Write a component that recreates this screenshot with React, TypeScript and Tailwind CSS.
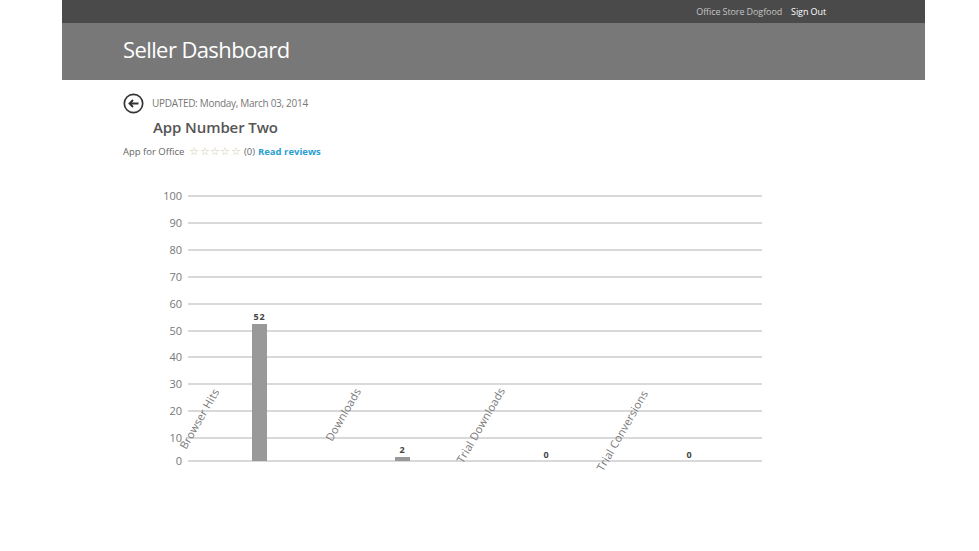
const gridLines = [
  { label: "100", y: 196 },
  { label: "90", y: 223 },
  { label: "80", y: 250 },
  { label: "70", y: 277 },
  { label: "60", y: 304 },
  { label: "50", y: 331 },
  { label: "40", y: 357 },
  { label: "30", y: 384 },
  { label: "20", y: 411 },
  { label: "10", y: 438 },
  { label: "0", y: 461 },
];

const bars = [
  { value: "52", x: 252, top: 324, labelX: 259.5, labelY: 319.5 },
  { value: "2", x: 395, top: 457, labelX: 402.5, labelY: 453 },
  { value: "0", x: 539, top: 461, labelX: 546.5, labelY: 458 },
  { value: "0", x: 682, top: 461, labelX: 689.5, labelY: 458 },
];

const categories = [
  { label: "Browser Hits", x: 186, y: 450 },
  { label: "Downloads", x: 332, y: 442 },
  { label: "Trial Downloads", x: 463, y: 464 },
  { label: "Trial Conversions", x: 603, y: 472 },
];

function Chart() {
  return (
    <svg width="979" height="330" viewBox="0 170 979 330" className="block -ml-[123px]" style={{ fontFamily: '"Open Sans", sans-serif' }}>
      {gridLines.map((line) => (
        <g key={line.label}>
          <line x1="188" x2="762" y1={line.y} y2={line.y} stroke="#cdcdcd" strokeWidth="1.5" />
          <text x="182" y={line.y + 4} textAnchor="end" fontSize="11" fill="#777777">
            {line.label}
          </text>
        </g>
      ))}
      {bars.map((bar, i) => (
        <g key={i}>
          {bar.top < 461 && <rect x={bar.x} y={bar.top} width="15" height={461 - bar.top} fill="#999999" />}
          <text x={bar.labelX} y={bar.labelY} textAnchor="middle" fontSize="9" fontWeight="700" letterSpacing="0.8" fill="#444444">
            {bar.value}
          </text>
        </g>
      ))}
      {categories.map((cat) => (
        <text
          key={cat.label}
          x={cat.x}
          y={cat.y}
          fontSize="11"
          letterSpacing="0.15"
          fill="#777777"
          transform={`rotate(-60 ${cat.x} ${cat.y})`}
        >
          {cat.label}
        </text>
      ))}
    </svg>
  );
}

export default function App() {
  return (
    <div className="h-[551px] w-[979px] overflow-hidden bg-white" style={{ fontFamily: '"Open Sans", sans-serif' }}>
      <header className="ml-[62px] w-[863px]">
        <div className="flex h-[23px] items-center justify-end gap-[9px] bg-[#4a4a4a] pr-[99px] text-[9px] tracking-[-0.1px]">
          <span className="text-[#c4c4c4]">Office Store Dogfood</span>
          <span className="text-white">Sign Out</span>
        </div>
        <div className="flex h-[57px] items-center bg-[#787878] pb-[6px] pl-[61px]">
          <h1 className="text-[22px] leading-none tracking-[-0.6px] text-white">Seller Dashboard</h1>
        </div>
      </header>

      <main className="ml-[123px]">
        <div className="mt-[11px] flex h-[24px] items-center gap-[8px]">
          <svg width="21" height="21" viewBox="0 0 21 21" fill="none" stroke="#333333">
            <circle cx="10.5" cy="10.5" r="9.2" strokeWidth="1.7" />
            <path d="M15.5 10.5H6.5M10 7l-3.5 3.5L10 14" strokeWidth="1.9" />
          </svg>
          <p className="text-[10px] tracking-[-0.3px] text-[#777777]">UPDATED: Monday, March 03, 2014</p>
        </div>
        <h2 className="mt-[2px] pl-[30px] text-[15px] leading-[20px] font-semibold tracking-[-0.1px] text-[#555555]">App Number Two</h2>
        <div className="mt-[7px] flex h-[16px] items-center text-[9.5px] text-[#666666]">
          <span>App for Office</span>
          <span className="ml-[5px] text-[10.5px] tracking-[0.3px] text-[#cfc8a8]">☆☆☆☆☆</span>
          <span className="ml-[3px]">(0)</span>
          <a className="ml-[3px] font-bold text-[#2aa0d0]">Read reviews</a>
        </div>
        <div className="mt-[10px]">
          <Chart />
        </div>
      </main>
    </div>
  );
}
